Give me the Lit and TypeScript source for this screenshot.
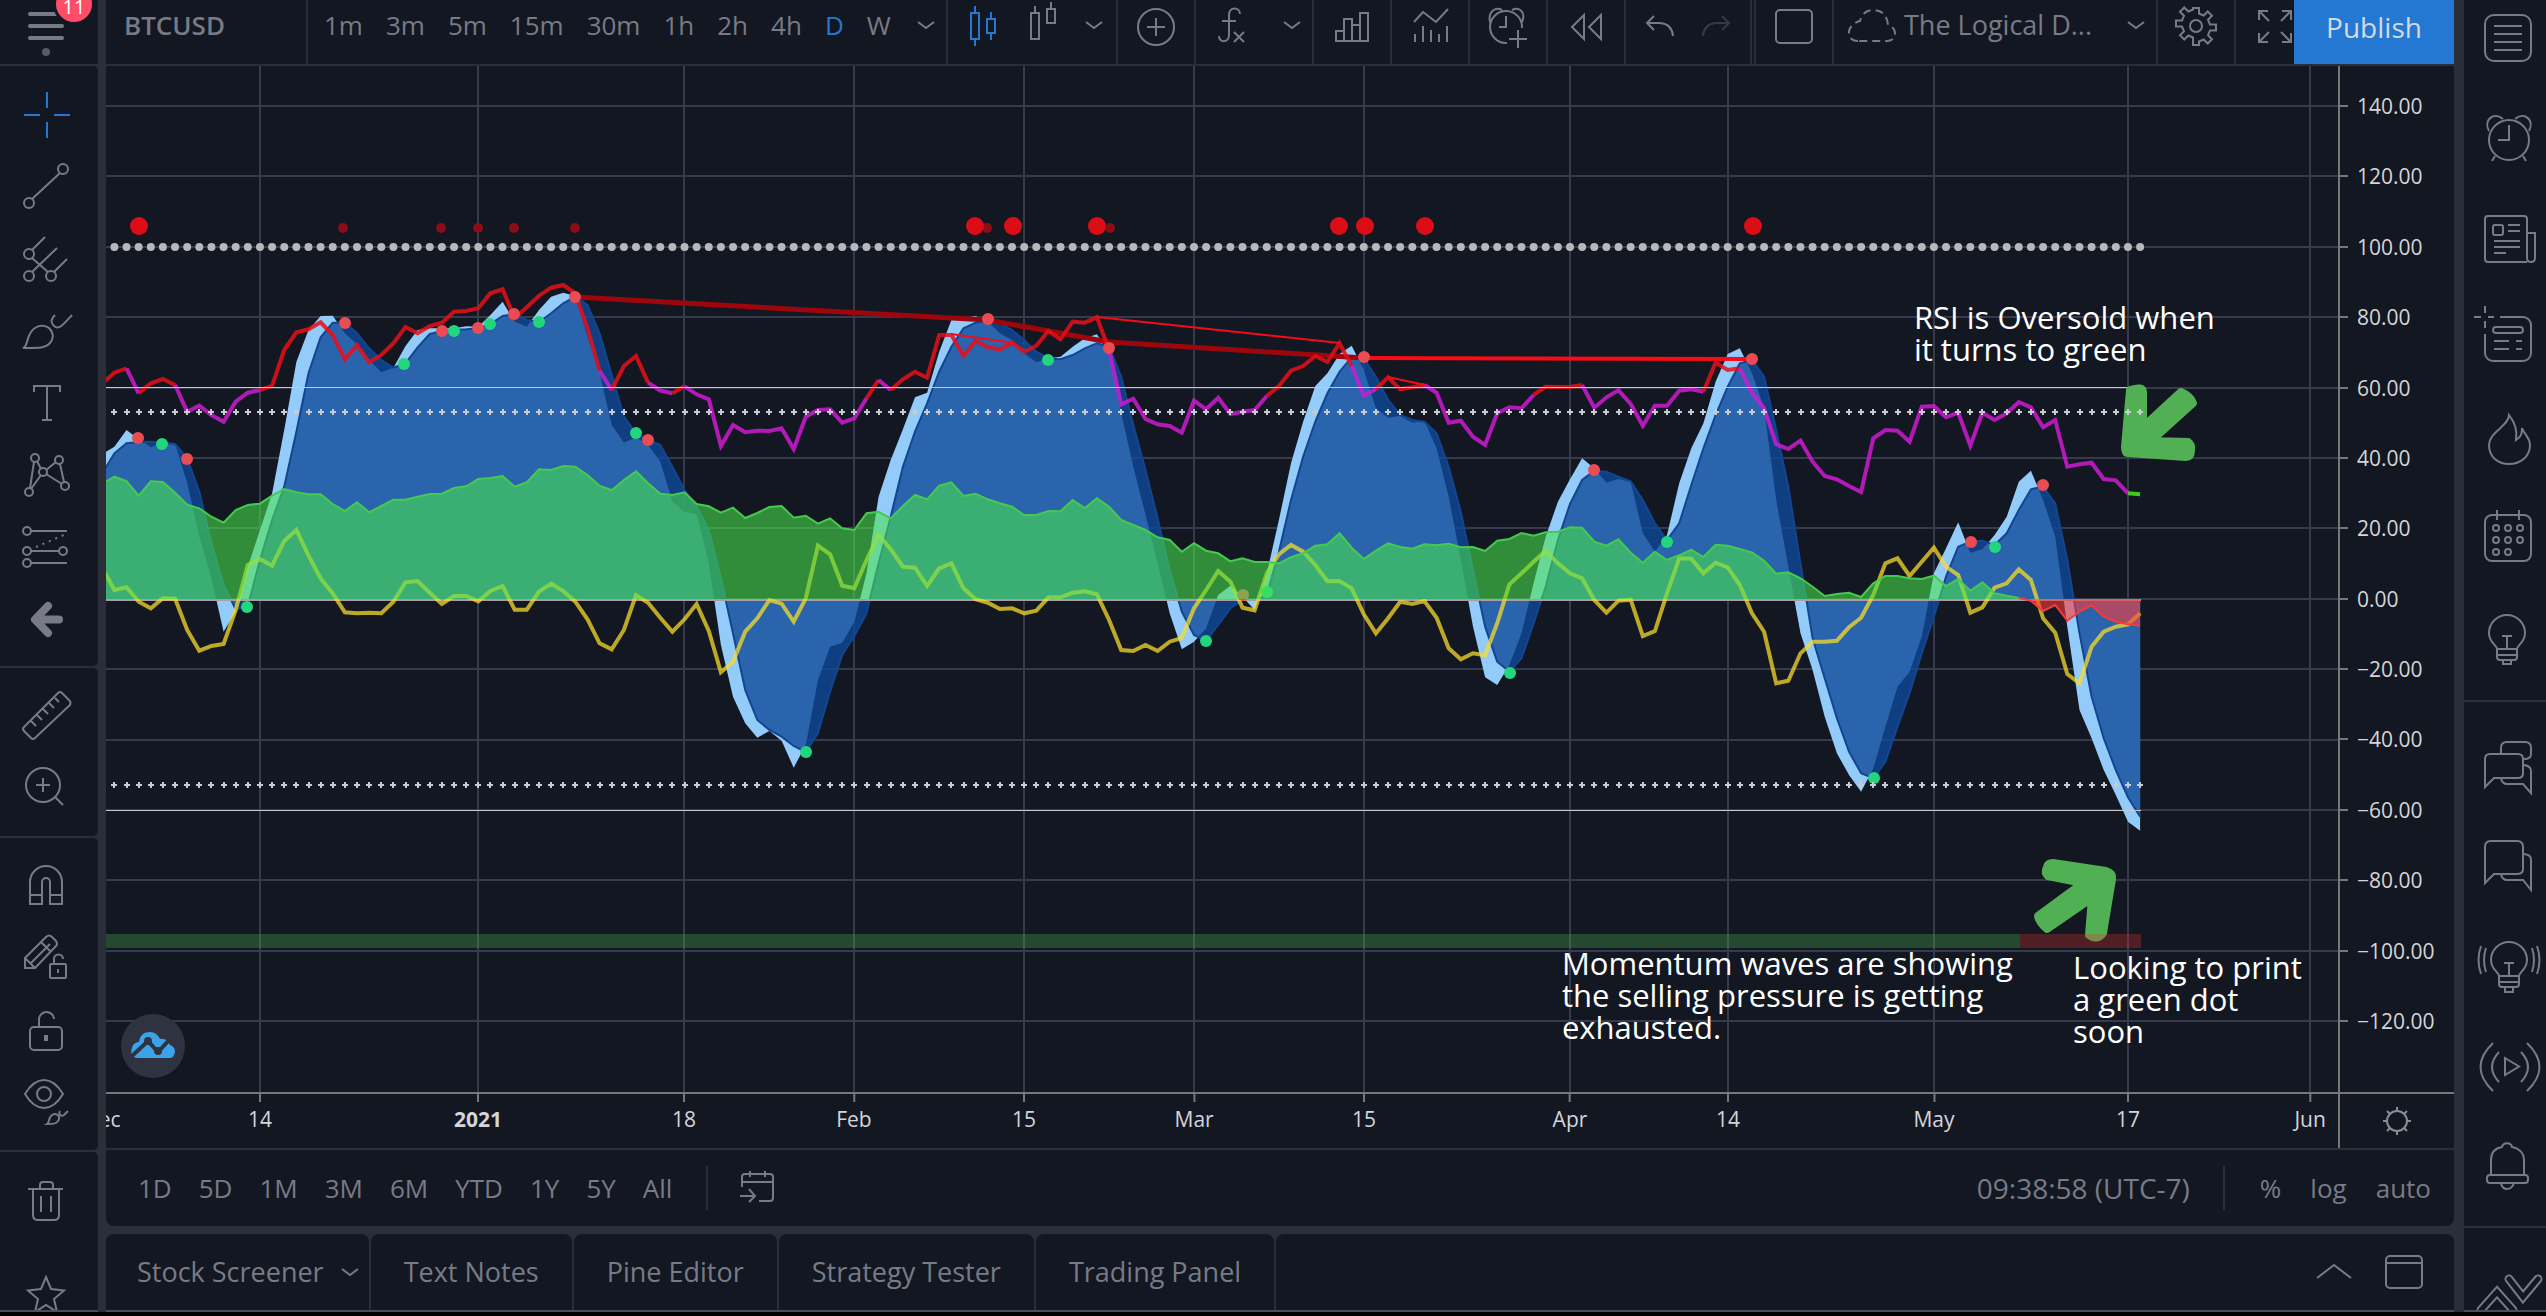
import { LitElement, html, svg, css, nothing } from "lit";
import { customElement, property } from "lit/decorators.js";

/* ---------- icons: every drawing sits on a 56 x 56 board ---------- */

const dot = (x: number, y: number, r = 4) => svg`<circle cx=${x} cy=${y} r=${r}></circle>`;

const ICONS: Record<string, unknown> = {
  cross: svg`<path d="M30 5V21M30 35V51M7 28H23M37 28H53"/>`,
  trend: svg`${dot(12, 44, 5)}${dot(46, 10, 5)}<path d="M15 40L43 14"/>`,
  fork: svg`${dot(12, 23, 5)}${dot(12, 45, 5)}${dot(34, 45, 5)}<path d="M15 19L28 6M15 27L31 41M15 41L40 17M37 41L50 28"/>`,
  brush: svg`<path d="M6 45C11 43 9 36 14 29C19 22 27 21 32 25C37 30 37 36 32 41C28 45 24 45 6 45ZM38 12C34 16 33 19 37 23C42 27 45 23 55 12"/>`,
  text: svg`<path d="M17 17V11H43V17M30 11V45M25 45H35"/>`,
  pattern: svg`${dot(18, 11)}${dot(42, 13)}${dot(26, 25)}${dot(48, 39)}${dot(12, 45)}<path d="M13 41L17 15M14 42L24 28M20 14L24 22M29 23L39 15M29 27L45 37M43 17L47 35"/>`,
  forecast: svg`${dot(10, 12, 4)}${dot(10, 32, 4)}${dot(46, 32, 4)}${dot(10, 44, 4)}<path d="M14 12H50M14 32H42M14 44H50"/><path d="M19 28L47 16" stroke-dasharray="2 5"/>`,
  back: svg`<path d="M31 15L18 28.500L31 42M19 28.500H42" stroke-width="8" stroke-linecap="round" stroke-linejoin="round"/>`,
  ruler: svg`<path d="M41 5Q43 3 45 5L53 13Q54 15 53 17L18 50Q16 52 14 50L7 43Q5 41 7 39ZM14 33L19 38M20 27L25 32M26 21L31 26M32 15L37 20M38 10L42 14"/>`,
  zoom: svg`${dot(26, 25, 17)}<path d="M19 25H33M26 18V32M38 37L46 45"/>`,
  magnet: svg`<path d="M13 46V24a16 16 0 0 1 32 0V46H33V24a4 4 0 0 0-8 0V46ZM13 37H25M33 37H45"/>`,
  pencilLock: svg`<path d="M29 7Q32 4 35 7L39 11Q41 14 39 16L18 38H8V28ZM24 12L34 22M8 28L18 38M14 33L33 14"/><rect x="33" y="34" width="16" height="14" rx="1"></rect><path d="M37 34V29a4.500 4.500 0 0 1 9 0M41 39V43"/>`,
  lock: svg`<rect x="13" y="25" width="32" height="23" rx="4"></rect><path d="M22 25V18a7.500 7.500 0 0 1 15-1"/><path d="M29 33V39" stroke-width="4"/>`,
  eye: svg`<path d="M8 20C14 10 20 6 27 6S40 10 46 20C40 30 34 34 27 34S14 30 8 20Z"/>${dot(27, 20, 7)}<path d="M30 50C33 48 31 44 35 41C40 38 44 43 41 47C39 50 36 50 30 50ZM43 37C41 40 44 43 47 41L51 37"/>`,
  trash: svg`<path d="M11 17H46M23 17V13Q23 10 26 10H33Q36 10 36 13V17M16 17V43Q16 48 21 48H37Q42 48 42 43V17M24 24V40M34 24V40"/>`,
  star: svg`<path d="M29 9L34 21L47 22.500L37 31L40 44L29 37L18 44L21 31L11 22.500L24 21Z"/>`,

  candles: svg`<rect x="16" y="16" width="8" height="26"></rect><rect x="32" y="22" width="8" height="14"></rect><path d="M20 9V16M20 42V49M36 15V22M36 36V43"/>`,
  hollow: svg`<rect x="16" y="16" width="8" height="26"></rect><rect x="32" y="12" width="8" height="14"></rect><path d="M20 9V16M36 5V12"/>`,
  compare: svg`${dot(28, 30, 18)}<path d="M19 30H37M28 21V39"/>`,
  fx: svg`<path d="M36 17C36 10 25 9 25 18V38C25 46 15 46 15 39M18 24H32M30 35L40 45M40 35L30 45"/>`,
  bars: svg`<path d="M12 44V34H20V44M20 44V22H28V44M28 28H36M36 44V16H44V44M11 44H45"/>`,
  stats: svg`<path d="M12 25L21 15L34 25L46 12M13 37V45M21 29V45M29 33V45M37 37V45M45 29V45"/>`,
  alarmPlus: svg`<path d="M42 31A16 16 0 1 0 27 46M26 19V30H19M38 33V51M29 42H47M10 25C8 16 14 9 22 13M42 25C46 16 40 9 32 13"/>`,
  rewind: svg`<path d="M26 18V42L14 30ZM43 18V42L31 30Z"/>`,
  undo: svg`<path d="M22 19L15 26L22 33M15 26H28Q40 27 41 39"/>`,
  redo: svg`<path d="M34 19L41 26L34 33M41 26H28Q16 27 15 39"/>`,
  square: svg`<rect x="10" y="13" width="36" height="33" rx="4"></rect>`,
  cloudDash: svg`<path d="M14 44C2 44 1 28 16 24C18 16 23 13 29 13C38 13 43 18 44 28C54 31 53 44 43 44Z" stroke-dasharray="8 5"/>`,
  gear: svg`<path d="M25 11h6v5.500l4.700 2 4-4 4.300 4.300-4 4 2 4.700H48v6h-6l-2 4.700 4 4-4.300 4.300-4-4-4.700 2V48h-6v-7.500l-4.700-2-4 4-4.300-4.300 4-4-2-4.700H8v-6h6l2-4.700-4-4 4.300-4.300 4 4 4.700-2Z"/>${dot(28, 29, 6)}`,
  full: svg`<path d="M13 23V14H22M14 15L23 24M36 14H45V23M44 15L35 24M13 36V45H22M14 44L23 35M36 45H45V36M44 44L35 35"/>`,
  goto: svg`<path d="M13 27V17Q13 14 16 14H41Q44 14 44 17V38Q44 41 41 41H30M13 22H44M21 11V17M36 11V17M11 36H25M20 29L26 36L20 42"/>`,
  sun: svg`${dot(28, 28, 10)}<path d="M28 14V18M28 38V42M14 28H18M38 28H42M18 18L21 21M35 35L38 38M38 18L35 21M21 35L18 38"/>`,
  up: svg`<path d="M11 34L28 21L45 34"/>`,
  window: svg`<rect x="10" y="12" width="36" height="32" rx="4"></rect><path d="M10 19H46"/>`,

  list: svg`<rect x="5" y="5" width="46" height="46" rx="9"></rect><path d="M14 16H42M14 24H42M14 32H42M14 40H42"/>`,
  alarm: svg`${dot(29, 30, 20)}<path d="M29 15V30H18M15 46L12 51M43 46L46 51M9 21C3 10 14 1 23 9M49 21C55 10 44 1 35 9"/>`,
  news: svg`<path d="M47 52H8Q5 52 5 49V9Q5 6 8 6H44Q47 6 47 9V48Q47 52 51 52T55 48V23H47"/><rect x="13" y="15" width="10" height="10" rx="2"></rect><path d="M28 15H40M28 21H40M14 31H40M14 37H40M14 43H26"/>`,
  hotlist: svg`<path d="M20 7H43a8 8 0 0 1 8 8V43a8 8 0 0 1-8 8H13a8 8 0 0 1-8-8V24M-6 7H1M8 7H14M5-4V3M5 11V18"/><rect x="13" y="17" width="30" height="6" rx="3"></rect><path d="M14 31H29M36 31H42M14 39H29M36 39H42"/>`,
  fire: svg`<path d="M29 5C29 16 9 22 9 35C9 47 18 54 29 54S50 47 50 35C50 27 45 26 42 18C42 24 41 27 36 30C38 18 33 10 29 5Z"/>`,
  calendar: svg`<rect x="5" y="5" width="46" height="46" rx="7"></rect><path d="M17 0V10M39 0V10"/>${[18, 30, 42].map((y) =>
    [16, 28, 40].map((x) => (x === 40 && y === 42 ? nothing : dot(x, y, 3))),
  )}`,
  bulb: svg`<path d="M17 39C17 35 9 33 9 23a18 18 0 0 1 36 0C45 33 37 35 37 39ZM17 39V47Q17 50 20 50H34Q37 50 37 47V39M17 45H37M23 50V54H31V50M22 26H32M27 26V39"/>`,
  chats: svg`<path d="M5 47V19Q5 14 10 14H38Q43 14 43 19V33Q43 38 38 38H14ZM21 14V8Q21 2 27 2H45Q51 2 51 8V14Q51 19 44 19M44 25Q51 26 51 31V53L43 44H27Q22 44 21 38"/>`,
  chat: svg`<path d="M5 43V7Q5 1 11 1H37Q43 1 43 7V29Q43 34 37 34H14ZM43 14Q51 14 51 20V50L43 40H27Q22 40 21 34"/>`,
  bulbLive: svg`<path d="M19 36C19 32 11 30 11 20a18 18 0 0 1 36 0C47 30 39 32 39 36ZM19 36V44Q19 47 22 47H36Q39 47 39 44V36M19 42H39M25 47V52H33V47M24 23H34M29 23V36M6 8Q2 20 6 32M1 6Q-4 20 1 34M52 8Q56 20 52 32M57 6Q62 20 57 34"/>`,
  live: svg`<path d="M25 18L39 26.500L25 35ZM19 12Q5 27 19 42M13 3Q-12 27 13 51M41 12Q55 27 41 42M47 3Q72 27 47 51"/>`,
  bell: svg`<path d="M11 35V20C11 12 16 8 22 7C23 2 31 2 32 7C38 8 44 12 44 20V35"/><rect x="7" y="35" width="41" height="8" rx="3"></rect><path d="M21 43Q22 49 27 49T34 43"/>`,
  zigzag: svg`<path d="M29 9L43 27L58 9M1 40L17 22L33 40" stroke-width="9" stroke-linejoin="miter" stroke-linecap="round"/><path d="M29 9L43 27L58 9M1 40L17 22L33 40" class="core" stroke-width="5" stroke-linecap="round"/>`,
};

@customElement("line-icon")
class LineIcon extends LitElement {
  @property() name = "";
  static styles = css`
    :host {
      display: block;
      flex: none;
      width: 56px;
      height: 56px;
    }
    .art {
      display: block;
      width: 100%;
      height: 100%;
      overflow: visible;
      fill: none;
      stroke: currentColor;
      stroke-width: 2;
    }
    .core {
      stroke: #131722;
    }
  `;
  render() {
    return html`<svg class="art" viewBox="0 0 56 56" aria-hidden="true">${ICONS[this.name]}</svg>`;
  }
}

/* ---------- chart series: one y per daily bar, first bar sits one step left of the plot ---------- */

const STEP = 12.13;
const ORIGIN = 114.4;
const ZERO = 599;
const barX = (i: number) => +(ORIGIN + STEP * i).toFixed(1);
const parse = (s: string) => s.trim().split(/\s+/).map((n) => Number(n) / 3);

const FAST = parse(`
1362 1340 1290 1318 1342 1328 1332 1450 1610 1735 1895 1835 1700 1590 1480 1290 1085 990 948 947 1000
1033 1080 1117 1103 1038 990 985 985 985 979 980 945 905 965 980 930 890 878 888 1010
1120 1275 1328 1312 1335 1385 1505 1535 1542 1690 1935 2090 2170 2213 2193 2222 2303 2235 2040 1940
1928 1865 1720 1490 1380 1288 1192 1178 1055 960 955 948 965 1000 1020 1060 1087 1075 1070 1040
1015 1003 1060 1240 1400 1545 1690 1840 1948 1925 1885 1785 1757 1790 1830 1720 1560 1390 1265 1158
1120 1062 1037 1110 1225 1253 1248 1268 1263 1345 1490 1680 1880 2032 2055 1995 1900 1750 1610 1505
1438 1375 1405 1448 1437 1445 1600 1655 1605 1450 1345 1270 1145 1062 1045 1120 1225 1500 1700 1900
2010 2150 2260 2325 2375 2305 2180 2060 2015 1910 1720 1645 1567 1658 1648 1605 1550 1445 1412 1500
1610 1880 2130 2215 2310 2385 2465 2492`);

const SLOW = parse(`
1420 1360 1330 1326 1325 1328 1332 1375 1475 1630 1755 1828 1818 1680 1560 1460 1295 1120 1012 968 968
1000 1045 1080 1103 1090 1042 1002 993 990 988 985 972 948 942 960 966 940 910 890 915
1000 1125 1250 1300 1318 1335 1400 1470 1520 1590 1735 1900 2070 2160 2190 2210 2238 2256 2200 2075
1965 1908 1840 1690 1550 1400 1295 1210 1115 1040 985 968 960 970 990 1020 1055 1075 1078 1065
1045 1030 1040 1130 1275 1410 1555 1710 1835 1905 1922 1875 1825 1800 1800 1785 1655 1500 1370 1265
1180 1115 1072 1075 1130 1200 1245 1260 1265 1300 1400 1535 1710 1880 1985 2015 1975 1870 1760 1620
1512 1440 1412 1415 1430 1444 1500 1570 1620 1570 1455 1345 1245 1160 1090 1080 1130 1290 1460 1690
1915 2035 2155 2255 2320 2335 2285 2180 2080 1960 1850 1730 1640 1625 1622 1635 1600 1530 1468 1460
1510 1680 1900 2090 2215 2310 2392 2450`);

const FLOW = parse(`
1450 1430 1443 1487 1444 1446 1478 1514 1525 1550 1568 1530 1515 1511 1487 1467 1477 1483 1483 1512 1533
1507 1537 1518 1499 1499 1490 1482 1481 1464 1459 1437 1434 1428 1460 1447 1408 1410 1398 1400 1425
1457 1471 1440 1414 1450 1481 1485 1477 1512 1519 1538 1523 1554 1539 1521 1518 1553 1547 1571 1555
1585 1590 1540 1535 1555 1518 1485 1498 1457 1447 1488 1481 1498 1510 1520 1545 1545 1533 1534 1500
1524 1495 1520 1560 1575 1590 1612 1620 1655 1630 1652 1660 1684 1675 1686 1686 1690 1672 1660 1637
1633 1600 1643 1677 1652 1630 1641 1646 1633 1636 1631 1642 1641 1653 1622 1617 1599 1607 1597 1595
1582 1583 1625 1637 1618 1658 1688 1655 1680 1666 1649 1671 1634 1637 1647 1657 1682 1721 1717 1735
1760 1788 1782 1778 1791 1750 1728 1728 1735 1737 1727 1758 1737 1772 1747 1780 1787 1794 1802 1833
1815 1862 1835 1816 1850 1865 1873 1877`);

const VWAP = parse(`
1705 1770 1762 1805 1825 1795 1796 1890 1952 1938 1932 1830 1695 1677 1697 1623 1590 1667 1735 1780 1837
1840 1838 1840 1805 1747 1743 1778 1812 1788 1788 1804 1773 1758 1829 1829 1775 1751 1773 1805 1858
1930 1948 1890 1785 1808 1853 1895 1858 1812 1893 2017 1985 1895 1855 1800 1811 1865 1795 1637 1663
1757 1765 1680 1605 1648 1700 1703 1758 1705 1690 1765 1798 1808 1827 1825 1840 1832 1792 1792 1778
1774 1783 1860 1950 1953 1935 1953 1925 1914 1825 1770 1713 1745 1823 1831 1720 1663 1635 1655 1695
1744 1743 1765 1843 1900 1855 1805 1812 1803 1853 1945 1978 1960 1966 1870 1753 1720 1685 1652 1690
1720 1735 1800 1838 1802 1799 1908 1893 1780 1675 1676 1720 1688 1702 1755 1840 1895 2050 2042 1960
1925 1925 1922 1882 1853 1785 1690 1675 1728 1685 1643 1700 1725 1838 1822 1763 1750 1708 1740 1855
1898 2022 2050 1940 1895 1880 1873 1840`);

const RSI = parse(`
1150 1118 1105 1180 1150 1137 1155 1235 1217 1245 1265 1205 1178 1170 1158 1050 997 988 967 1005 1078
1035 1087 1065 1030 981 1000 978 968 935 933 925 880 868 955 922 887 863 855 880 985
1112 1170 1098 1068 1148 1172 1180 1159 1183 1198 1338 1275 1297 1292 1293 1285 1347 1250 1230 1228
1268 1255 1195 1140 1170 1138 1115 1133 1005 1005 1068 1022 1042 1048 1028 1055 1037 993 1018 965
968 952 1050 1213 1196 1257 1273 1278 1298 1202 1228 1193 1242 1235 1230 1188 1158 1112 1098 1068
1086 1030 1098 1187 1168 1132 1168 1162 1155 1178 1268 1262 1310 1335 1240 1222 1225 1185 1160 1161
1161 1155 1223 1192 1171 1212 1277 1217 1217 1172 1168 1175 1088 1110 1105 1178 1225 1333 1347 1322
1385 1428 1438 1458 1476 1315 1290 1292 1325 1220 1218 1252 1238 1337 1238 1260 1240 1206 1222 1282
1260 1400 1393 1388 1437 1441 1480 1483`);

const LAST = 167;
const span = (s: number[], from: number, to: number) => {
  const out: string[] = [];
  for (let i = from; i <= to; i++) out.push(`${barX(i)},${s[i + 1].toFixed(1)}`);
  return out.join(" ");
};
const area = (s: number[], from: number, to: number) =>
  `${barX(from)},${ZERO} ${span(s, from, to)} ${barX(to)},${ZERO}`;

const RSI_SPANS: [number, number, string][] = [
  [-1, 1, "hot"], [1, 2, "mid"], [2, 5, "hot"], [5, 12, "mid"], [12, 40, "hot"], [40, 41, "mid"],
  [41, 44, "hot"], [44, 46, "mid"], [46, 47, "hot"], [47, 62, "mid"], [62, 63, "hot"], [63, 64, "mid"],
  [64, 82, "hot"], [82, 95, "mid"], [95, 102, "hot"], [102, 104, "mid"], [104, 108, "hot"],
  [108, 117, "mid"], [117, 121, "hot"], [121, 131, "mid"], [131, 134, "hot"], [134, 166, "mid"], [166, 167, "cool"],
];

const GRID_X = [260, 478, 684, 854, 1024, 1194, 1364, 1570, 1728, 1934, 2128, 2310];
const PRICES = ["140.00", "120.00", "100.00", "80.00", "60.00", "40.00", "20.00", "0.00",
  "−20.00", "−40.00", "−60.00", "−80.00", "−100.00", "−120.00"];
const DATES: [number, string][] = [
  [102, "Dec"], [260, "14"], [478, "2021"], [684, "18"], [854, "Feb"], [1024, "15"], [1194, "Mar"],
  [1364, "15"], [1570, "Apr"], [1728, "14"], [1934, "May"], [2128, "17"], [2310, "Jun"],
];
const SELL = [[138, 438], [187, 459], [345, 323], [442, 331], [478, 328], [514, 314], [575, 297], [648, 440],
  [988, 319], [1109, 348], [1364, 357], [1243, 595], [1594, 470], [1752, 359], [1971, 542], [2043, 485]];
const BUY = [[162, 444], [247, 607], [404, 364], [454, 331], [490, 324], [539, 322], [636, 433], [806, 752],
  [1048, 360], [1206, 641], [1267, 592], [1510, 673], [1667, 542], [1874, 778], [1995, 547]];
const BIG = [139, 975, 1013, 1097, 1339, 1365, 1425, 1753];
const SMALL = [343, 441, 478, 514, 575, 987, 1110, 1365, 1753];

@customElement("wave-chart")
class WaveChart extends LitElement {
  static styles = css`
    :host {
      display: grid;
      grid-template-columns: 1fr 116px;
      grid-template-rows: 1fr 56px;
      min-height: 0;
      background: #131722;
      color: #d4d5d9;
      font-size: 21px;
      line-height: 28px;
    }
    .plot {
      position: relative;
      min-width: 0;
      min-height: 0;
      overflow: hidden;
    }
    .canvas {
      position: absolute;
      width: 100%;
      height: 100%;
    }
    .grid { stroke: #363a4d; stroke-width: 2; }
    .fast { fill: #93cbfa; }
    .slow { fill: #104a9a; fill-opacity: 0.8; }
    .inflow { fill: #48e44c; fill-opacity: 0.58; }
    .outflow { fill: #fc3a37; fill-opacity: 0.6; }
    .line { fill: none; stroke-width: 3; stroke-linejoin: miter; }
    .slow-edge { stroke: #124592; stroke-width: 2; }
    .in-edge { stroke: #45c94f; stroke-width: 2; }
    .out-edge { stroke: #f03c3c; stroke-width: 2; }
    .vwap { stroke: #f9dc27; stroke-opacity: 0.74; stroke-width: 4; }
    .hot { stroke: #e60f18; stroke-opacity: 0.86; stroke-width: 4; }
    .mid { stroke: #cf1bd4; stroke-opacity: 0.84; stroke-width: 4; }
    .cool { stroke: #3fc81e; stroke-width: 4; }
    .zero { stroke: #a5a0a8; stroke-width: 2; }
    .band { stroke: #c6c8d0; stroke-width: 1; }
    .bead { stroke: #b7b7bc; stroke-width: 8; stroke-linecap: round; stroke-dasharray: 0 12.13; }
    .plus { stroke: #c9cbd2; }
    .fade { stroke: #9d060d; stroke-width: 5; }
    .div { stroke: #fb0b17; stroke-width: 4; }
    .thin { stroke: #f50b17; stroke-width: 2; }
    .big { fill: #dd0d17; }
    .small { fill: #8a0e17; }
    .sell { fill: #ea4c54; }
    .buy { fill: #22d67d; }
    .up { fill: #4caf50; fill-opacity: 0.33; }
    .down { fill: #db322f; fill-opacity: 0.3; }
    .arrow { fill: #52b054; stroke: #52b054; stroke-width: 8; stroke-linejoin: round; }
    .note {
      position: absolute;
      margin: 0;
      color: #ffffff;
      font-size: 31px;
      line-height: 32px;
      white-space: pre;
    }
    .cloud {
      position: absolute;
      left: 15px;
      bottom: 14px;
      width: 64px;
      height: 64px;
      padding: 0;
      border: 0;
      border-radius: 50%;
      background: #2f3241;
    }
    .cloud-art { display: block; width: 64px; height: 64px; }
    .cloud-fill { fill: #3ba3e8; }
    .cloud-cut { fill: none; stroke: #2f3241; stroke-width: 4; }
    .cloud-joint { fill: #2f3241; }
    .prices {
      box-sizing: border-box;
      display: flex;
      flex-direction: column;
      justify-content: space-between;
      margin: 0;
      padding: 26px 0 57px 17px;
      border-left: 2px solid #787878;
      list-style: none;
    }
    .price { position: relative; }
    .price::before {
      content: "";
      position: absolute;
      left: -17px;
      top: 13px;
      width: 8px;
      height: 2px;
      background: #787878;
    }
    .dates {
      position: relative;
      margin: 0;
      padding: 0;
      border-top: 2px solid #787878;
      list-style: none;
      overflow: hidden;
    }
    .date {
      position: absolute;
      top: 0;
      padding-top: 11px;
      transform: translateX(-50%);
    }
    .date::before {
      content: "";
      position: absolute;
      left: calc(50% - 1px);
      top: 0;
      width: 2px;
      height: 8px;
      background: #787878;
    }
    .year { font-weight: 700; }
    .corner {
      display: flex;
      align-items: center;
      justify-content: center;
      border: solid #787878;
      border-width: 2px 0 0 2px;
      padding: 0;
      background: none;
      color: #8a8c94;
    }
  `;

  private ys = Array.from({ length: 14 }, (_, k) => Math.round(106 + k * 70.4));

  render() {
    const beads = Array.from({ length: LAST + 1 }, (_, i) => i);
    const at = (x: number, y: number) => `left:${((x - 106) / 22.32).toFixed(2)}%;top:${((y - 66) / 10.26).toFixed(2)}%`;
    return html`
      <div class="plot">
        <svg class="canvas" viewBox="106 66 2232 1026" preserveAspectRatio="none" role="img" aria-label="Momentum wave oscillator">
          ${this.ys.map((y) => svg`<line class="grid" x1="106" x2="2338" y1=${y} y2=${y}></line>`)}
          ${GRID_X.map((x) => svg`<line class="grid" x1=${x} x2=${x} y1="66" y2="1092"></line>`)}
          <polygon class="fast" points=${area(FAST, -1, LAST)}></polygon>
          <polygon class="slow" points=${area(SLOW, -1, LAST)}></polygon>
          <polyline class="line slow-edge" points=${span(SLOW, -1, LAST)}></polyline>
          <line class="zero" x1="106" x2="2141" y1="600" y2="600"></line>
          <line class="line fade" x1="575" y1="297" x2="988" y2="320"></line>
          <line class="line fade" x1="988" y1="320" x2="1109" y2="342"></line>
          <line class="line fade" x1="1109" y1="342" x2="1364" y2="358"></line>
          <line class="line div" x1="1364" y1="358" x2="1752" y2="359"></line>
          ${RSI_SPANS.map(([a, b, c]) => svg`<polyline class="line ${c}" points=${span(RSI, a, b)}></polyline>`)}
          <line class="line thin" x1="1097" y1="317" x2="1340" y2="343"></line>
          <line class="line thin" x1="951" y1="334" x2="1014" y2="343"></line>
          <line class="line thin" x1="1388" y1="377" x2="1425" y2="385"></line>
          <polyline class="line vwap" points=${span(VWAP, -1, LAST)}></polyline>
          ${SELL.map(([x, y]) => svg`<circle class="sell" cx=${x} cy=${y} r="6"></circle>`)}
          ${BUY.map(([x, y]) => svg`<circle class="buy" cx=${x} cy=${y} r="6"></circle>`)}
          <polygon class="inflow" points=${area(FLOW, -1, 157)}></polygon>
          <polyline class="line in-edge" points=${span(FLOW, -1, 157)}></polyline>
          <polygon class="outflow" points=${area(FLOW, 157, LAST)}></polygon>
          <polyline class="line out-edge" points=${span(FLOW, 157, LAST)}></polyline>
          ${SMALL.map((x) => svg`<circle class="small" cx=${x} cy="228" r="5"></circle>`)}
          ${BIG.map((x) => svg`<circle class="big" cx=${x} cy="226" r="9"></circle>`)}
          <line class="band" x1="106" x2="2141" y1="387.5" y2="387.5"></line>
          <line class="band" x1="106" x2="2141" y1="810.500" y2="810.500"></line>
          <line class="bead" x1=${ORIGIN} x2="2141" y1="247" y2="247"></line>
          <path class="arrow" d="M2130 390Q2143 386 2143 392L2143 427L2181 392Q2190 396 2193 403L2151 441L2188 442Q2192 445 2191 450Q2191 457 2186 457L2128 453Q2125 453 2125 447Z"/>
          <path class="arrow" d="M2053 863L2106 871Q2113 873 2112 879L2103 933Q2097 941 2089 935L2092 898L2047 929Q2039 922 2038 916L2083 883L2048 876Q2044 873 2047 867Q2048 863 2053 863Z"/>
          ${[412, 785].map((y) => svg`<path class="plus" stroke-width="2" d=${beads.map((i) => `M${Math.round(barX(i))} ${y - 3}v6m-3 -3h6`).join("")}/>`)}
          <rect class="up" x="106" y="934" width="1914" height="14"></rect>
          <rect class="down" x="2020" y="934" width="121" height="14"></rect>
        </svg>
        <p class="note" style=${at(1914, 301)}>${"RSI is Oversold when\nit turns to green"}</p>
        <p class="note" style=${at(1562, 947)}>${"Momentum waves are showing\nthe selling pressure is getting\nexhausted."}</p>
        <p class="note" style=${at(2073, 951)}>${"Looking to print\na green dot\nsoon"}</p>
        <button class="cloud" aria-label="TradingView">
          <svg class="cloud-art" viewBox="0 0 64 64" aria-hidden="true">
            <path class="cloud-fill" d="M17 44C11 44 9 39 11 34C12 29 16 28 18 28C19 21 23 18 29 18C34 18 37 21 39 25C43 24 47 26 49 31C54 33 55 37 53 41C52 44 49 44 47 44Z"/>
            <path class="cloud-cut" d="M11 42L27 27L37 38L50 24"/>
            <circle class="cloud-joint" cx="27" cy="27" r="4"></circle>
            <circle class="cloud-joint" cx="37" cy="37" r="4"></circle>
          </svg>
        </button>
      </div>
      <ul class="prices">${PRICES.map((p) => html`<li class="price">${p}</li>`)}</ul>
      <ul class="dates">
        ${DATES.map(([x, t]) => html`<li class="date ${t === "2021" ? "year" : ""}" style="left:${((x - 106) / 22.32).toFixed(2)}%">${t}</li>`)}
      </ul>
      <button class="corner" aria-label="Scale settings"><line-icon name="sun"></line-icon></button>
    `;
  }
}

/* ---------- page ---------- */

const LEFT_GROUPS = [
  ["cross", "trend", "fork", "brush", "text", "pattern", "forecast", "back"],
  ["ruler", "zoom"],
  ["magnet", "pencilLock", "lock", "eye"],
  ["trash", "star"],
];
const RIGHT_GROUPS = [
  ["list", "alarm", "news", "hotlist", "fire", "calendar", "bulb"],
  ["chats", "chat", "bulbLive", "live", "bell"],
  ["zigzag"],
];

@customElement("app-root")
class AppRoot extends LitElement {
  static styles = css`
    :host {
      box-sizing: border-box;
      display: grid;
      grid-template-columns: 98px 1fr 84px;
      column-gap: 8px;
      height: 100vh;
      overflow: hidden;
      border-bottom: 4px solid #000000;
      background: #2a2e39;
      color: #787b86;
      font: 26px/36px "Open Sans", "Noto Sans", sans-serif;
    }
    button {
      display: flex;
      align-items: center;
      justify-content: center;
      margin: 0;
      padding: 0;
      border: 0;
      background: none;
      color: inherit;
      font: inherit;
      white-space: nowrap;
    }
    .side, .right, .main {
      display: flex;
      flex-direction: column;
      gap: 2px;
      min-width: 0;
      min-height: 0;
      overflow: hidden;
      border-bottom: 2px solid #4a4d58;
    }
    .right { margin-left: 2px; }
    .set {
      display: flex;
      flex-direction: column;
      flex: none;
      padding: 12px 0;
      border-radius: 0 5px 5px 0;
      background: #131722;
    }
    .set:last-child { flex: 1; gap: 24px; }
    .tall { padding: 13px 0 11px; }
    .tool { flex: none; height: 72px; padding-right: 8px; }
    .blue { color: #2478d1; }
    .menu {
      position: relative;
      flex: none;
      height: 64px;
      background: #131722;
    }
    .menu-art { width: 98px; height: 64px; fill: #787b86; }
    .menu-dot { fill: #585b66; }
    .badge {
      position: absolute;
      left: 53px;
      top: -17px;
      box-sizing: border-box;
      width: 42px;
      height: 42px;
      padding-top: 14px;
      border: 3px solid #131722;
      border-radius: 50%;
      background: #ff4d67;
      color: #ffffff;
      font-size: 20px;
      line-height: 14px;
      text-align: center;
    }
    .stack {
      display: flex;
      flex-direction: column;
      flex: none;
      padding: 16px 0 8px;
      background: #131722;
    }
    .stack:first-child { padding: 0 0 12px; }
    .stack:first-child .wide:first-child { margin-top: -12px; }
    .stack:last-child { flex: 1; padding: 20px 0 0; }
    .wide { flex: none; height: 100px; padding-left: 6px; }

    .main { gap: 0; }
    .bar {
      display: flex;
      flex: none;
      height: 64px;
      background: #131722;
      border-bottom: 2px solid #2a2e39;
    }
    .cell {
      box-sizing: border-box;
      display: flex;
      align-items: center;
      justify-content: center;
      flex: none;
      width: 78px;
      padding-bottom: 14px;
      border-right: 2px solid #2a2e39;
    }
    .symbol { width: 202px; justify-content: flex-start; padding-left: 18px; font-weight: 600; }
    .intervals { width: 640px; justify-content: flex-start; gap: 1px; padding-left: 5px; }
    .interval { padding: 0 11px; }
    .more { margin: 0 8px 0 auto; }
    .styles { width: 170px; gap: 4px; justify-content: flex-start; padding-left: 7px; }
    .styles .more { margin-right: 10px; }
    .formula { width: 118px; gap: 20px; }
    .history { width: 126px; margin-right: 2px; }
    .split { width: 80px; border-left: 2px solid #2a2e39; }
    .dim { color: #363a45; }
    .layout { width: 324px; justify-content: flex-start; gap: 4px; padding-left: 10px; font-size: 27px; }
    .layout .chev { margin-left: auto; margin-right: 8px; }
    .rest { flex: 1; min-width: 0; overflow: hidden; border: 0; justify-content: flex-start; padding-left: 10px; }
    .publish { flex: none; width: 160px; padding-bottom: 10px; background: #2478d1; color: #d4d9e4; font-size: 28px; }
    .chev { display: block; flex: none; width: 24px; height: 24px; fill: none; stroke: currentColor; stroke-width: 2; }

    wave-chart { flex: 1; }
    .ranges {
      display: flex;
      align-items: center;
      flex: none;
      gap: 1px;
      box-sizing: border-box;
      height: 78px;
      padding: 0 9px 0 19px;
      border-top: 2px solid #2a2e39;
      border-radius: 0 0 8px 8px;
      background: #131722 padding-box;
    }
    .range { padding: 0 13px; }
    .mode { padding: 0 14px; }
    .rule { flex: none; width: 2px; height: 44px; margin: 0 20px; background: #2a2e39; }
    .clock { margin-left: auto; padding: 0 12px; font-size: 28px; }
    .tabs { display: flex; flex: none; gap: 2px; height: 76px; margin-top: 8px; font-size: 27px; }
    .tab { padding: 0 33px; border-radius: 8px 8px 0 0; background: #131722; }
    .first { gap: 14px; padding: 0 7px 0 31px; }
    .tail {
      display: flex;
      align-items: center;
      justify-content: flex-end;
      flex: 1;
      gap: 14px;
      padding-right: 22px;
      border-radius: 8px 8px 0 0;
      background: #131722;
    }
  `;

  private chev() {
    return html`<svg class="chev" viewBox="0 0 24 24" aria-hidden="true"><path d="M4 9L12 15L20 9"/></svg>`;
  }

  private cell(name: string) {
    return html`<button class="cell" aria-label=${name}><line-icon name=${name}></line-icon></button>`;
  }

  render() {
    return html`
      <nav class="side" aria-label="Drawing tools">
        <button class="menu" aria-label="Menu">
          <svg class="menu-art" viewBox="0 0 98 64" aria-hidden="true">
            <rect x="28" y="12" width="36" height="4" rx="2"></rect>
            <rect x="28" y="24" width="36" height="4" rx="2"></rect>
            <rect x="28" y="36" width="36" height="4" rx="2"></rect>
            <circle class="menu-dot" cx="46" cy="52" r="4"></circle>
          </svg>
          <span class="badge">11</span>
        </button>
        ${LEFT_GROUPS.map((g, k) => html`
          <div class="set ${k === 0 ? "tall" : ""}">
            ${g.map((n) => html`<button class="tool ${n === "cross" ? "blue" : ""}" aria-label=${n}><line-icon name=${n}></line-icon></button>`)}
          </div>`)}
      </nav>

      <main class="main">
        <div class="bar">
          <button class="cell symbol">BTCUSD</button>
          <div class="cell intervals">
            ${["1m", "3m", "5m", "15m", "30m", "1h", "2h", "4h", "D", "W"].map((t) =>
              html`<button class="interval ${t === "D" ? "blue" : ""}">${t}</button>`)}
            <button class="more" aria-label="More intervals">${this.chev()}</button>
          </div>
          <div class="cell styles">
            <button class="blue" aria-label="Candles"><line-icon name="candles"></line-icon></button>
            <button aria-label="Hollow candles"><line-icon name="hollow"></line-icon></button>
            <button class="more" aria-label="More styles">${this.chev()}</button>
          </div>
          ${this.cell("compare")}
          <div class="cell formula">
            <button aria-label="Indicators"><line-icon name="fx"></line-icon></button>
            <button aria-label="Favorite indicators">${this.chev()}</button>
          </div>
          ${["bars", "stats", "alarmPlus", "rewind"].map((n) => this.cell(n))}
          <div class="cell history">
            <button aria-label="Undo"><line-icon name="undo"></line-icon></button>
            <button class="dim" aria-label="Redo" disabled><line-icon name="redo"></line-icon></button>
          </div>
          <button class="cell split" aria-label="Select layout"><line-icon name="square"></line-icon></button>
          <button class="cell layout"><line-icon name="cloudDash"></line-icon><span>The Logical D...</span>${this.chev()}</button>
          ${this.cell("gear")}
          <button class="cell rest" aria-label="Fullscreen"><line-icon name="full"></line-icon></button>
          <button class="publish">Publish</button>
        </div>

        <wave-chart></wave-chart>

        <div class="ranges">
          ${["1D", "5D", "1M", "3M", "6M", "YTD", "1Y", "5Y", "All"].map((t) => html`<button class="range">${t}</button>`)}
          <span class="rule"></span>
          <button aria-label="Go to date"><line-icon name="goto"></line-icon></button>
          <button class="clock">09:38:58 (UTC-7)</button>
          <span class="rule"></span>
          <button class="mode">%</button>
          <button class="mode">log</button>
          <button class="mode">auto</button>
        </div>

        <div class="tabs">
          <button class="tab first">Stock Screener ${this.chev()}</button>
          ${["Text Notes", "Pine Editor", "Strategy Tester", "Trading Panel"].map((t) => html`<button class="tab">${t}</button>`)}
          <div class="tail">
            <button aria-label="Open panel"><line-icon name="up"></line-icon></button>
            <button aria-label="Maximize panel"><line-icon name="window"></line-icon></button>
          </div>
        </div>
      </main>

      <nav class="right" aria-label="Widgets">
        ${RIGHT_GROUPS.map((g) => html`
          <div class="stack">
            ${g.map((n) => html`<button class="wide" aria-label=${n}><line-icon name=${n}></line-icon></button>`)}
          </div>`)}
      </nav>
    `;
  }
}
